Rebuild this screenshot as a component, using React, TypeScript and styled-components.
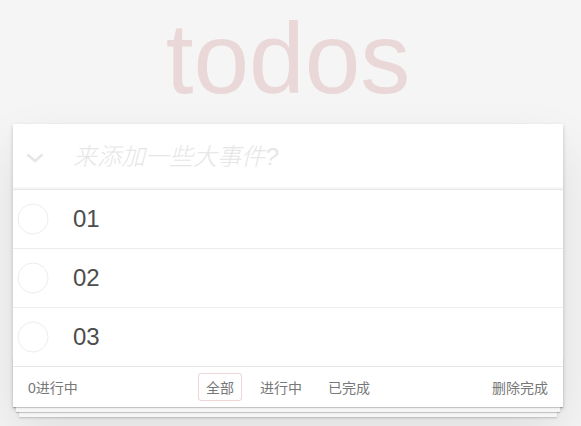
import styled, { createGlobalStyle } from "styled-components";

interface ITodo {
  id: number;
  title: string;
  done: boolean;
}

const todos: ITodo[] = [
  { id: 1, title: "01", done: false },
  { id: 2, title: "02", done: false },
  { id: 3, title: "03", done: false },
];

const filters = ["全部", "进行中", "已完成"];

const App = () => {
  const left = todos.filter((t) => t.done).length;

  return (
    <>
      <GlobalStyle />
      <TodoApp>
        <Title>todos</Title>
        <Header>
          <ToggleAll>
            <svg width="18" height="10" viewBox="0 0 18 10">
              <path
                d="M1.5 1.5 L9 8 L16.5 1.5"
                fill="none"
                stroke="#e6e6e6"
                strokeWidth="2.6"
              />
            </svg>
          </ToggleAll>
          <NewTodo placeholder="来添加一些大事件?" />
        </Header>
        <Main>
          {todos.map((todo) => (
            <TodoRow key={todo.id}>
              <Toggle>
                <svg width="32" height="32" viewBox="0 0 32 32">
                  <circle
                    cx="16"
                    cy="16"
                    r="15"
                    fill="none"
                    stroke="#ededed"
                    strokeWidth="1"
                  />
                </svg>
              </Toggle>
              <Label>{todo.title}</Label>
            </TodoRow>
          ))}
        </Main>
        <Footer>
          <Count>{left}进行中</Count>
          <Filters>
            {filters.map((f, i) => (
              <FilterLink key={f} selected={i === 0}>
                {f}
              </FilterLink>
            ))}
          </Filters>
          <ClearCompleted>删除完成</ClearCompleted>
        </Footer>
      </TodoApp>
    </>
  );
};

const GlobalStyle = createGlobalStyle`
  html, body {
    margin: 0;
    padding: 0;
  }

  body {
    background: #f5f5f5;
    color: #4d4d4d;
    font: 14px "Liberation Sans", Arial, "Noto Sans CJK SC", sans-serif;
    min-height: 426px;
  }
`;

const TodoApp = styled.section`
  position: relative;
  width: 550px;
  margin: 124px 0 40px 13px;
  background: #fff;
  box-shadow: 0 2px 4px 0 rgba(0, 0, 0, 0.2), 0 25px 50px 0 rgba(0, 0, 0, 0.1);
`;

const Title = styled.h1`
  position: absolute;
  top: -121px;
  left: 0;
  width: 100%;
  margin: 0;
  font-size: 100px;
  font-weight: 100;
  text-align: center;
  color: rgba(175, 47, 47, 0.15);
  line-height: 1.1;
  font-family: "Liberation Sans", Arial, sans-serif;
`;

const Header = styled.header`
  display: flex;
  align-items: center;
  height: 65px;
  box-shadow: inset 0 -2px 1px rgba(0, 0, 0, 0.03);
`;

const ToggleAll = styled.div`
  width: 60px;
  height: 65px;
  display: flex;
  align-items: center;
  padding: 2px 0 0 13px;
  box-sizing: border-box;
`;

const NewTodo = styled.input`
  flex: 1;
  border: none;
  outline: none;
  background: transparent;
  padding: 0 16px 0 0;
  font-size: 24px;
  font-family: "Liberation Sans", Arial, "Noto Sans CJK SC", sans-serif;
  color: #4d4d4d;

  &::placeholder {
    font-style: italic;
    font-weight: 300;
    color: #e6e6e6;
  }
`;

const Main = styled.ul`
  list-style: none;
  margin: 0;
  padding: 0;
  border-top: 1px solid #e6e6e6;
`;

const TodoRow = styled.li`
  display: flex;
  align-items: center;
  height: 58px;
  border-bottom: 1px solid #ededed;
  font-size: 24px;

  &:last-child {
    border-bottom: none;
  }
`;

const Toggle = styled.div`
  width: 60px;
  height: 58px;
  display: flex;
  align-items: center;
  padding-left: 4px;
  box-sizing: border-box;
`;

const Label = styled.label`
  color: #4d4d4d;
  line-height: 1.2;
  padding-top: 1px;
`;

const Footer = styled.footer`
  position: relative;
  display: flex;
  align-items: center;
  justify-content: space-between;
  height: 20px;
  padding: 10px 15px;
  color: #777;
  border-top: 1px solid #e6e6e6;
  font-family: "Liberation Sans", Arial, "Noto Sans CJK SC", sans-serif;

  &:before {
    content: "";
    position: absolute;
    right: 0;
    bottom: 0;
    left: 0;
    height: 50px;
    overflow: hidden;
    box-shadow: 0 1px 1px rgba(0, 0, 0, 0.2), 0 8px 0 -3px #f6f6f6,
      0 9px 1px -3px rgba(0, 0, 0, 0.2), 0 16px 0 -6px #f6f6f6,
      0 17px 2px -6px rgba(0, 0, 0, 0.2);
  }
`;

const Count = styled.span`
  position: relative;
  z-index: 1;
  width: 150px;
`;

const Filters = styled.ul`
  position: absolute;
  left: 0;
  right: 0;
  display: flex;
  justify-content: center;
  list-style: none;
  margin: 0;
  padding: 0;
  z-index: 1;
`;

const FilterLink = styled.li<{ selected: boolean }>`
  margin: 3px 5px;
  padding: 3px 7px;
  border-radius: 3px;
  border: 1px solid ${(p) => (p.selected ? "rgba(175, 47, 47, 0.2)" : "transparent")};
  color: #777;
`;

const ClearCompleted = styled.span`
  position: relative;
  z-index: 1;
  color: #777;
`;

export default App;
